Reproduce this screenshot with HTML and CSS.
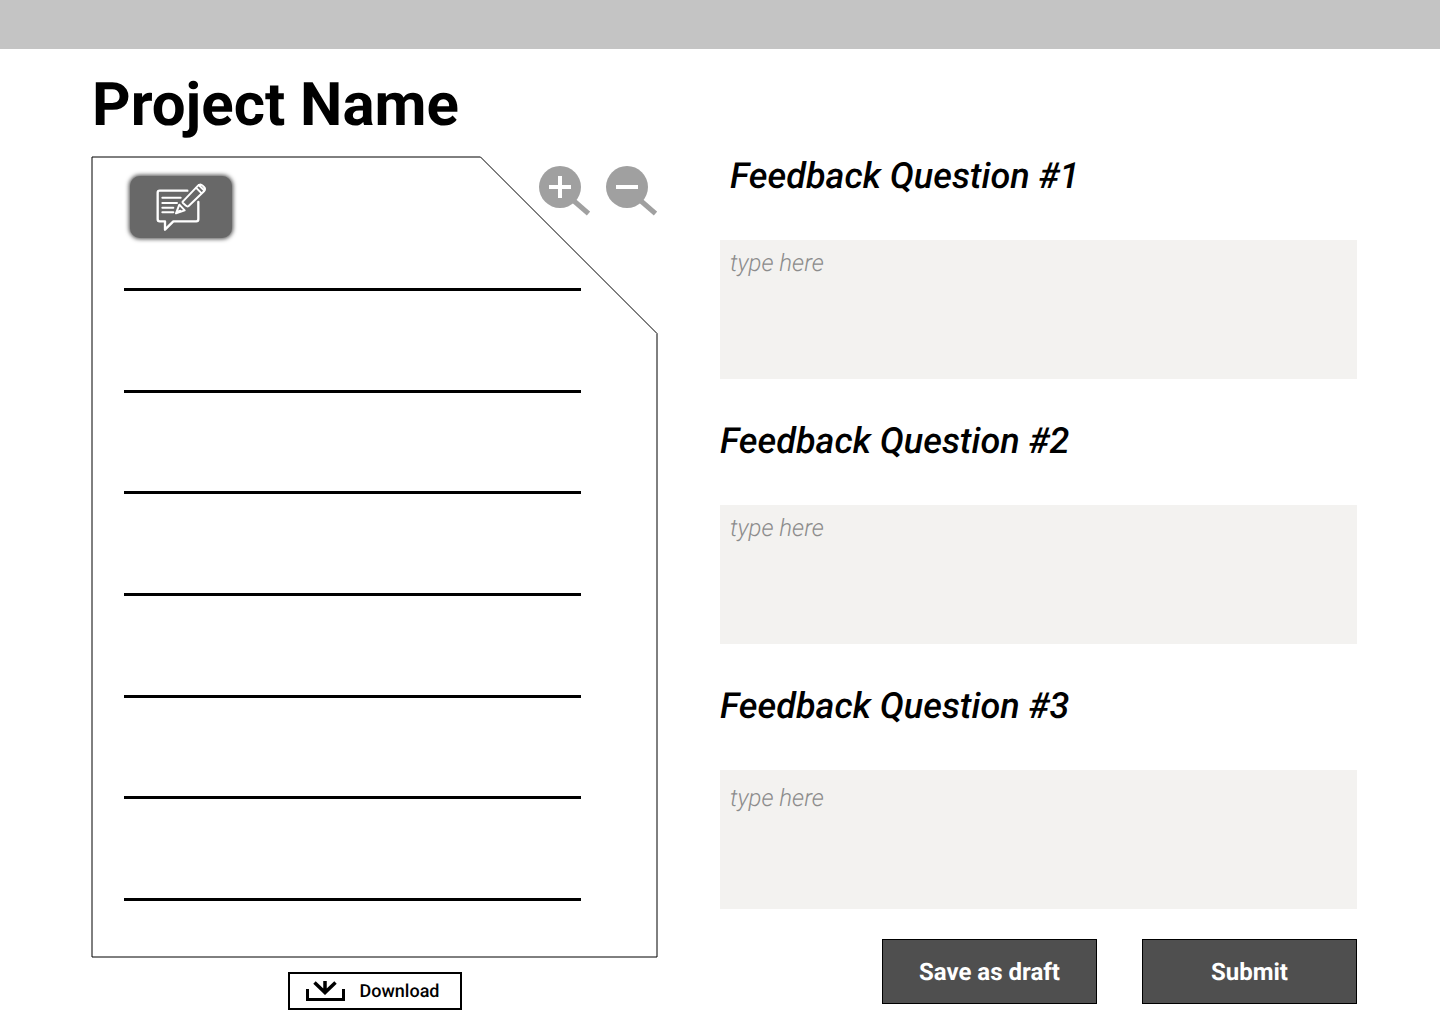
FILE: index.html
```html
<!DOCTYPE html>
<html lang="en">
<head>
  <meta charset="UTF-8">
  <meta name="viewport" content="width=device-width, initial-scale=1">
  <title>Project Name</title>
  <link rel="stylesheet" href="styles.css">
</head>
<body>
  <header class="topbar"></header>
  <main class="page">
    <h1>Project Name</h1>
    <div class="columns">
      <section class="preview">
        <div class="sheet">
          <svg class="sheet-outline" viewBox="0 0 565 800" preserveAspectRatio="none" aria-hidden="true">
            <path d="M0 0H388.500L565 176.500V800H0Z" fill="none" stroke="#000" vector-effect="non-scaling-stroke"/>
          </svg>
          <div class="toolbar">
            <button type="button" class="annotate" aria-label="Add comment">
              <svg width="51" height="50" viewBox="107 49 153 150" fill="none" stroke="#fff" stroke-width="7" stroke-linecap="round" stroke-linejoin="round">
                <path d="M201 75H118a6 6 0 0 0-6 6v80a6 6 0 0 0 6 6h16v25l25-25h69a6 6 0 0 0 6-6v-52"/>
                <path d="M126 96h55M126 112h44M126 126h33M126 140h33" stroke-width="6"/>
                <path d="M167 143l10-26 16 17zM188 107l45-47q7-7 14 0l4 4q6 6 0 13l-46 44q-4 3-8-1l-9-8q-3-3 0-5zM227 66l17 17M235 58l17 17M173 138l7-3" stroke-width="6"/>
              </svg>
            </button>
            <div class="zoom">
              <button type="button" aria-label="Zoom in">
                <svg width="51" height="50" viewBox="0 0 51 50">
                  <path d="M35 35l14.500 12.500" stroke="#a0a0a0" stroke-width="5"/>
                  <circle cx="21" cy="21" r="21" fill="#a0a0a0"/>
                  <path d="M10 21h22M21 10v22" stroke="#fff" stroke-width="4"/>
                </svg>
              </button>
              <button type="button" aria-label="Zoom out">
                <svg width="51" height="50" viewBox="0 0 51 50">
                  <path d="M35 35l14.500 12.500" stroke="#a0a0a0" stroke-width="5"/>
                  <circle cx="21" cy="21" r="21" fill="#a0a0a0"/>
                  <path d="M10 21h22" stroke="#fff" stroke-width="4"/>
                </svg>
              </button>
            </div>
          </div>
          <div class="lines">
            <hr><hr><hr><hr><hr><hr><hr>
          </div>
        </div>
        <button type="button" class="download">
          <svg width="39" height="22" viewBox="0 0 39 22" fill="none" stroke="#000" stroke-width="3">
            <path d="M1.500 9v10.500h36V9"/>
            <path d="M19 1v12M8.500 2.500L19 12.500 29.500 2.500" stroke-width="3.500"/>
          </svg>
          Download
        </button>
      </section>

      <form class="feedback">
        <div class="question">
          <label class="indent" for="q1">Feedback Question #1</label>
          <textarea id="q1" placeholder="type here"></textarea>
        </div>
        <div class="question">
          <label for="q2">Feedback Question #2</label>
          <textarea id="q2" placeholder="type here"></textarea>
        </div>
        <div class="question">
          <label for="q3">Feedback Question #3</label>
          <textarea id="q3" class="roomy" placeholder="type here"></textarea>
        </div>
        <div class="actions">
          <button type="button">Save as draft</button>
          <button type="submit">Submit</button>
        </div>
      </form>
    </div>
  </main>
</body>
</html>
```
FILE: styles.css
```css
* { box-sizing: border-box; }
body { font-family: Roboto, "Liberation Sans", sans-serif; background: #fff; color: #000; margin: 0; text-rendering: geometricPrecision; }
button, textarea { font-family: inherit; text-rendering: inherit; }
button { cursor: pointer; }
svg { display: block; }

.topbar { height: 49px; background: #c4c4c4; }
.page { padding: 21px 83px 14px 92px; }
h1 { margin: 0 0 15px; font-size: 60px; line-height: 70px; font-weight: 700; }
.columns { display: grid; grid-template-columns: 565fr 637fr; gap: 63px; align-items: start; }

/* document preview */
.preview { display: flex; flex-direction: column; align-items: center; padding-top: 2px; }
.sheet { position: relative; width: 100%; height: 800px; display: flex; flex-direction: column; padding-bottom: 56px; }
.sheet-outline { position: absolute; inset: 0; width: 100%; height: 100%; overflow: visible; pointer-events: none; }
.toolbar { display: flex; justify-content: space-between; align-items: flex-start; height: 131px; padding: 9px 0 0 38px; }
.annotate { display: flex; align-items: center; justify-content: center; width: 102px; height: 62px; margin-top: 10px; padding: 0; border: none; border-radius: 10px; background: #686868; box-shadow: 0 0 4px 1px rgba(0, 0, 0, 0.7); }
.zoom { display: flex; gap: 16px; }
.zoom button { padding: 0; border: none; background: none; }
.lines { flex: 1; display: flex; flex-direction: column; justify-content: space-between; padding: 0 76px 0 32px; }
.lines hr { width: 100%; height: 3px; margin: 0; border: none; background: #000; }
.download { display: flex; align-items: center; gap: 15px; width: 174px; height: 38px; margin-top: 15px; padding: 0 16px; border: 2px solid #000; background: #fff; color: #000; font-size: 18px; font-weight: 500; }

/* feedback form */
.question { margin-bottom: 41px; }
.question:nth-child(3) { margin-bottom: 30px; }
.question label { display: block; margin-bottom: 43px; font-size: 36px; line-height: 42px; font-weight: 500; font-style: italic; }
.question .indent { padding-left: 10px; }
textarea { display: block; width: 100%; height: 139px; padding: 9px 10px; border: none; background: #f3f2f0; resize: none; font-size: 24px; line-height: 28px; font-weight: 300; font-style: italic; }
textarea::placeholder { color: #8c8c8c; opacity: 1; }
.roomy { padding-top: 14px; }
.actions { display: flex; justify-content: flex-end; gap: 45px; }
.actions button { width: 215px; height: 65px; border: 1px solid #000; background: #4f4f4f; color: #fff; font-size: 24px; font-weight: 700; }
```
